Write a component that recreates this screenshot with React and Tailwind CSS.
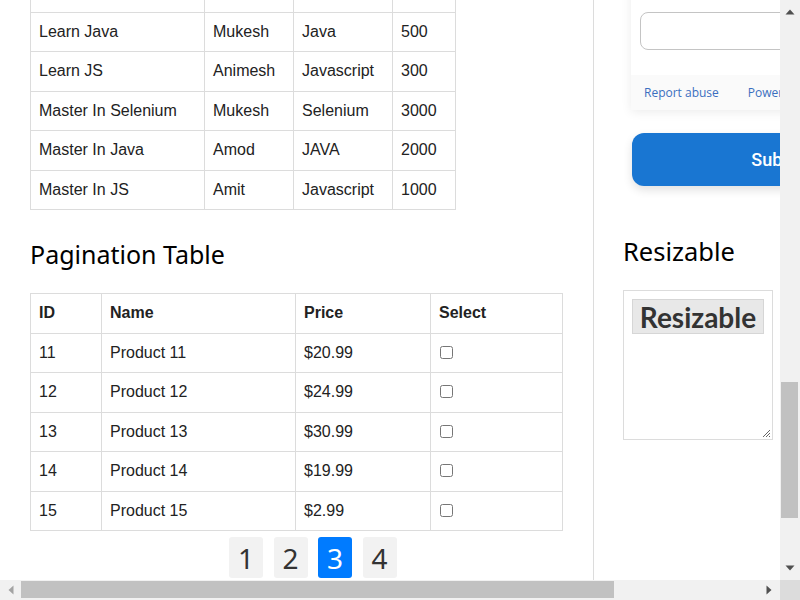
export default function App() {
  const courses = [
    ['Learn Java', 'Mukesh', 'Java', '500'],
    ['Learn JS', 'Animesh', 'Javascript', '300'],
    ['Master In Selenium', 'Mukesh', 'Selenium', '3000'],
    ['Master In Java', 'Amod', 'JAVA', '2000'],
    ['Master In JS', 'Amit', 'Javascript', '1000'],
  ];
  const products = [
    ['11', 'Product 11', '$20.99'],
    ['12', 'Product 12', '$24.99'],
    ['13', 'Product 13', '$30.99'],
    ['14', 'Product 14', '$19.99'],
    ['15', 'Product 15', '$2.99'],
  ];
  const td = 'border border-[#dcdcdc] px-[8px] align-middle';

  return (
    <div className="w-[800px] h-[600px] overflow-hidden bg-white flex flex-col">
      <div className="flex h-[580px]">
        <div className="w-[780px] h-[580px] overflow-hidden flex">
          {/* main column */}
          <main className="w-[594px] shrink-0 border-r border-[#dcdcdc] pl-[30px]">
            <table className="mt-[-28px] border-collapse table-fixed w-[425px] text-[16px] text-[#222] font-['Liberation_Sans',Arial,sans-serif]">
              <colgroup>
                <col className="w-[174px]" />
                <col className="w-[89px]" />
                <col className="w-[99px]" />
                <col className="w-[63px]" />
              </colgroup>
              <tbody>
                <tr className="h-[39.5px]">
                  <td className={td}></td>
                  <td className={td}></td>
                  <td className={td}></td>
                  <td className={td}></td>
                </tr>
                {courses.map((r, i) => (
                  <tr key={i} className="h-[39.5px]">
                    {r.map((c, j) => (
                      <td key={j} className={td}>{c}</td>
                    ))}
                  </tr>
                ))}
              </tbody>
            </table>

            <h2 className="mt-[28px] mb-[22px] text-[25px] leading-[33px] text-black font-['Noto_Sans',sans-serif]">
              Pagination Table
            </h2>

            <table className="border-collapse table-fixed w-[532px] text-[16px] text-[#222] font-['Liberation_Sans',Arial,sans-serif]">
              <colgroup>
                <col className="w-[71px]" />
                <col className="w-[194px]" />
                <col className="w-[135px]" />
                <col className="w-[132px]" />
              </colgroup>
              <thead>
                <tr className="h-[39.5px]">
                  <th className={td + ' text-left font-bold'}>ID</th>
                  <th className={td + ' text-left font-bold'}>Name</th>
                  <th className={td + ' text-left font-bold'}>Price</th>
                  <th className={td + ' text-left font-bold'}>Select</th>
                </tr>
              </thead>
              <tbody>
                {products.map((r, i) => (
                  <tr key={i} className="h-[39.5px]">
                    <td className={td}>{r[0]}</td>
                    <td className={td}>{r[1]}</td>
                    <td className={td}>{r[2]}</td>
                    <td className={td}>
                      <input type="checkbox" className="m-0 ml-px mb-[3px] w-[13px] h-[13px] align-middle" />
                    </td>
                  </tr>
                ))}
              </tbody>
            </table>

            <div className="mt-[6px] pl-[199px] flex gap-[10.5px] font-['Noto_Sans',sans-serif] text-[28px]">
              {[1, 2, 3, 4].map((n) => (
                <div
                  key={n}
                  className={
                    n === 3
                      ? 'w-[34px] h-[41px] rounded-[3px] bg-[#007bff] text-white flex items-center justify-center'
                      : 'w-[34px] h-[41px] rounded-[3px] bg-[#f2f2f2] text-[#333] flex items-center justify-center'
                  }
                >
                  {n}
                </div>
              ))}
            </div>
          </main>

          {/* sidebar */}
          <aside className="w-[420px] shrink-0 pl-[29px]">
            <div className="mt-[-40px] ml-[8px] w-[300px] bg-white shadow-[0_2px_10px_rgba(0,0,0,0.08)]">
              <div className="h-[52px]" />
              <div className="ml-[9px] h-[38px] border border-[#c4c4c4] rounded-[8px]" />
              <div className="h-[25px]" />
              <div className="h-[35px] bg-[#fafafa] pl-[13px] flex items-center gap-[29px] text-[12px] text-[#3b6fc0] font-['Open_Sans',sans-serif]">
                <span>Report abuse</span>
                <span>Powered by</span>
              </div>
            </div>

            <div className="mt-[23px] ml-[9px] w-[296px] h-[53px] rounded-[12px] bg-[#1976d2] shadow-[0_4px_10px_rgba(0,0,0,0.12)] flex items-center justify-center text-white text-[18px] font-medium font-['Roboto',sans-serif]">
              Submit
            </div>

            <h2 className="mt-[49px] text-[25.5px] leading-[33px] text-black font-['Noto_Sans',sans-serif]">
              Resizable
            </h2>

            <div className="relative mt-[22px] w-[150px] h-[150px] border border-[#dcdcdc] p-[8px]">
              <div className="h-[35px] border border-[#d6d6d6] bg-[#e8e8e8] flex items-center justify-center text-[28px] font-bold text-[#333] font-['Lato',sans-serif]">
                Resizable
              </div>
              <svg className="absolute right-[1px] bottom-[1px]" width="10" height="10" viewBox="0 0 10 10">
                <path d="M9 2 L2 9 M9 5 L5 9 M9 8 L8 9" stroke="#666" strokeWidth="1" />
              </svg>
            </div>
          </aside>
        </div>

        {/* vertical scrollbar */}
        <div className="relative w-[20px] h-[580px] bg-[#f1f1f1]">
          <svg className="absolute left-[5px] top-[9px]" width="10" height="6" viewBox="0 0 10 6">
            <polygon points="0.5,5.5 5,0.5 9.5,5.5" fill="#505050" />
          </svg>
          <div className="absolute left-[1px] top-[382px] w-[17px] h-[136px] bg-[#c1c1c1]" />
          <svg className="absolute left-[5px] top-[565px]" width="10" height="6" viewBox="0 0 10 6">
            <polygon points="0.5,0.5 9.5,0.5 5,5.5" fill="#505050" />
          </svg>
        </div>
      </div>

      {/* horizontal scrollbar */}
      <div className="flex h-[20px]">
        <div className="relative w-[780px] h-[20px] bg-[#f1f1f1]">
          <svg className="absolute left-[8px] top-[5px]" width="6" height="10" viewBox="0 0 6 10">
            <polygon points="5.5,0.5 5.5,9.5 0.5,5" fill="#a3a3a3" />
          </svg>
          <div className="absolute left-[21px] top-[1px] w-[593px] h-[17px] bg-[#c1c1c1]" />
          <svg className="absolute left-[766px] top-[5px]" width="6" height="10" viewBox="0 0 6 10">
            <polygon points="0.5,0.5 5.5,5 0.5,9.5" fill="#505050" />
          </svg>
        </div>
        <div className="w-[20px] h-[20px] bg-[#dcdcdc]" />
      </div>
    </div>
  );
}
